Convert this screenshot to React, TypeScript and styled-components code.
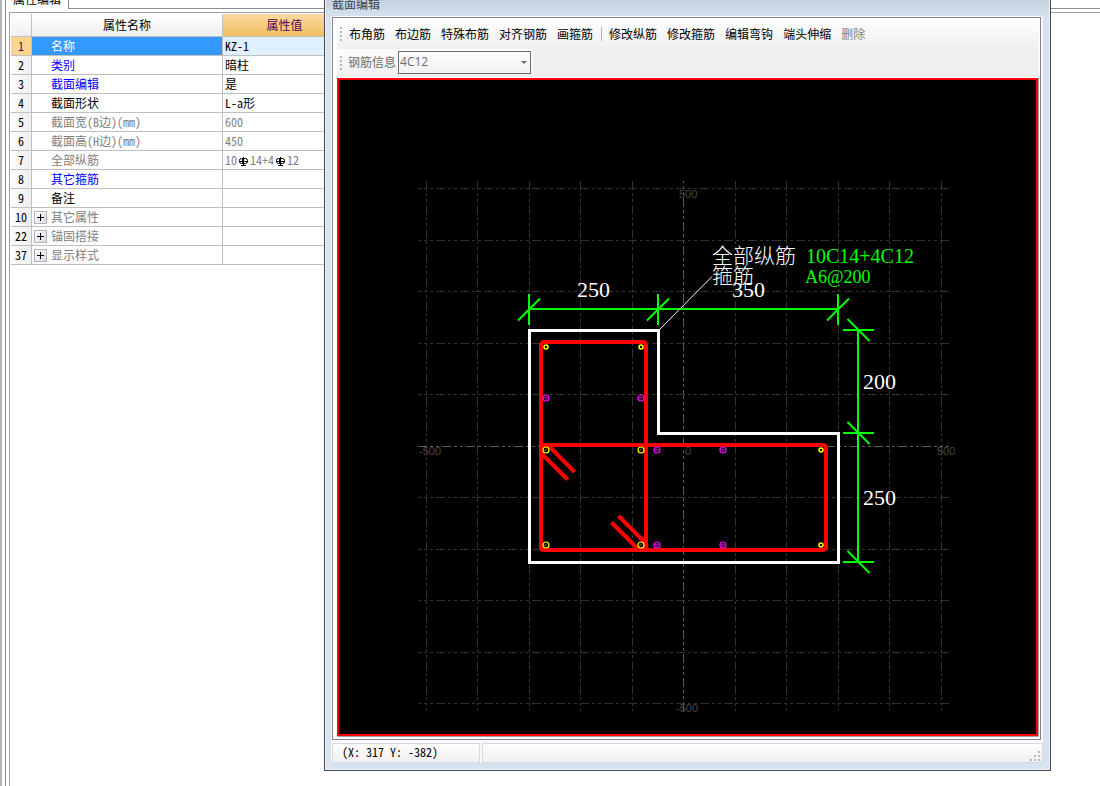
import React from "react";
import styled, { createGlobalStyle, css } from "styled-components";

const GlobalStyle = createGlobalStyle`
  * { box-sizing: border-box; }
  body {
    margin: 0;
    background: #fff;
    color: #000;
    font: 12px/16px "Noto Sans CJK SC", "Liberation Sans", sans-serif;
  }
  button, select { font: inherit; }
`;

const Page = styled.div`
  position: relative;
  display: flex;
  min-height: 100vh;
  overflow: hidden;
`;

const Splitter = styled.div`
  flex: none;
  width: 6px;
  border-left: 2px solid #b4b4b8;
  border-right: 1px solid #8c8c96;
`;

const Dock = styled.main`
  flex: 1;
  min-width: 0;
  display: flex;
  flex-direction: column;
`;

const TabStrip = styled.div`
  display: flex;
  height: 9px;
`;

const Tab = styled.div`
  display: flex;
  align-items: flex-end;
  padding: 0 7px 4px;
  border-right: 1px solid #8c8c96;
  line-height: 12px;
  overflow: hidden;
`;

const TabFiller = styled.div`
  flex: 1;
  border-bottom: 1px solid #8c8c96;
`;

const Panel = styled.section`
  flex: 1;
  margin: 3px 0 0 3px;
  padding: 1px;
  border: solid #a0a0a4;
  border-width: 1px 0 0 1px;
`;

const PropertyTable = styled.table`
  width: 336px;
  table-layout: fixed;
  border-spacing: 0;
  font-feature-settings: "hwid";
`;

const line = css`
  border: solid #c0c0c0;
  border-width: 0 1px 1px 0;
`;

const HeadCell = styled.th<{ $active?: boolean; $width: number }>`
  ${line}
  width: ${(p) => p.$width}px;
  height: 23px;
  padding: 0;
  font-weight: 400;
  color: ${(p) => (p.$active ? "#5a005a" : "#000")};
  background: ${(p) =>
    p.$active
      ? "linear-gradient(#fbdba0, #f0c060)"
      : "linear-gradient(#fff, #efefef)"};
`;

const NumberCell = styled.th<{ $active?: boolean }>`
  ${line}
  height: 19px;
  padding: 0;
  font-weight: 400;
  color: ${(p) => (p.$active ? "#5a005a" : "#000")};
  background: ${(p) =>
    p.$active ? "#ffd48c" : "linear-gradient(90deg, #fdfdfd, #eeeeee)"};
`;

const NameCell = styled.td<{ $color: string; $active?: boolean; $group?: boolean }>`
  ${line}
  padding: 0 0 0 ${(p) => (p.$group ? 2 : 19)}px;
  color: ${(p) => (p.$active ? "#fff" : p.$color)};
  background: ${(p) => (p.$active ? "#3399ff" : "#fff")};
`;

const GroupLabel = styled.div`
  display: flex;
  align-items: center;
  gap: 4px;
`;

const ExpandButton = styled.button`
  display: grid;
  place-items: center;
  width: 13px;
  height: 13px;
  padding: 0;
  border: 1px solid #b4b4b4;
  background: linear-gradient(135deg, #fff, #d8dce4);
`;

const ValueCell = styled.td<{ $color: string; $active?: boolean }>`
  ${line}
  padding: 0 0 0 2px;
  line-height: 16px;
  color: ${(p) => p.$color};
  background: ${(p) => (p.$active ? "#e0f0ff" : "#fff")};
`;

const RebarIcon = styled.svg`
  width: 13px;
  height: 11px;
  vertical-align: -2px;
`;

const Dialog = styled.section`
  position: absolute;
  inset: 0 49px 15px 324px;
  display: flex;
  flex-direction: column;
  padding: 0 7px 7px 6px;
  border: solid #484a4e;
  border-width: 0 1px 1px;
  background: #d7e3f1;
  box-shadow: inset 1px -1px 0 #edf2f8, inset -1px 0 0 #edf2f8;
`;

const TitleBar = styled.h1`
  flex: none;
  height: 16px;
  margin: 0 -6px 0 -5px;
  padding-left: 6px;
  overflow: hidden;
  font-size: 12px;
  font-weight: 400;
  line-height: 8px;
  color: #3c444c;
  background: linear-gradient(#c4d1df, #d5e1ee);
`;

const Client = styled.div`
  flex: 1;
  min-height: 0;
  display: flex;
  flex-direction: column;
  padding: 1px 0 0 1px;
  background: #f6f8fb;
`;

const Frame = styled.div`
  flex: 1;
  min-height: 0;
  display: flex;
  flex-direction: column;
  margin-right: 2px;
  padding: 3px 1px 2px 4px;
  border: 1px solid #82868e;
  background: #fff;
`;

const Toolbars = styled.div`
  flex: none;
  padding-bottom: 1px;
  background: linear-gradient(#efefef, #efefef) top / 100% 56px no-repeat;
`;

const Toolbar = styled.div`
  display: flex;
  align-items: center;
  height: 28px;
  padding: 0 0 2px 3px;
  background: linear-gradient(#fdfdfd, #efefef);
`;

const ComboToolbar = styled(Toolbar)`
  width: 196px;
  padding-bottom: 1px;
  border-radius: 3px;
`;

const Grip = styled.span`
  flex: none;
  width: 2px;
  height: 14px;
  margin-right: 2px;
  background: repeating-linear-gradient(#b8b8b8 0 2px, transparent 2px 4px);
`;

const ToolButton = styled.button`
  flex: none;
  padding: 0 5px;
  border: 0;
  background: none;
  color: #000;
  white-space: nowrap;
  line-height: 20px;

  &:disabled { color: #808080; }
`;

const Separator = styled.span`
  flex: none;
  width: 1px;
  height: 14px;
  margin: 0 2px 0 3px;
  background: #b8b8b8;
`;

const ComboLabel = styled.label`
  padding: 0 2px 1px 4px;
  color: #6d6d6d;
`;

const Combo = styled.div`
  position: relative;
  width: 133px;
  height: 23px;
`;

const ComboSelect = styled.select`
  appearance: none;
  width: 100%;
  height: 100%;
  padding: 0 16px 1px 1px;
  border: 1px solid #6d6d6d;
  border-radius: 0;
  background: transparent;
  color: #6d6d6d;
  font-family: "Open Sans", sans-serif;
  opacity: 1;
`;

const ComboArrow = styled.span`
  position: absolute;
  right: 4px;
  top: 10px;
  border: solid transparent;
  border-width: 3px 3px 0;
  border-top-color: #6d6d6d;
  pointer-events: none;
`;

const Viewport = styled.div`
  flex: 1;
  min-height: 0;
  display: flex;
  border: solid #a0a0a4;
  border-width: 0 1px 1px 0;
`;

const Drawing = styled.svg`
  flex: 1;
  min-width: 0;
  border: 2px solid #ff0000;
  background: #000;
`;

const StatusBar = styled.footer`
  flex: none;
  display: flex;
  gap: 2px;
  padding-top: 3px;
`;

const StatusCell = styled.div<{ $grow?: boolean }>`
  flex: ${(p) => (p.$grow ? "1" : "0 0 148px")};
  display: flex;
  align-items: flex-end;
  justify-content: ${(p) => (p.$grow ? "flex-end" : "flex-start")};
  height: 20px;
  padding: ${(p) => (p.$grow ? "0 1px 0" : "0 9px 2px")};
  border: 1px solid #d9d9d9;
  background: linear-gradient(#fdfdfd, #f0f0f0);
  font-feature-settings: "hwid";
`;

type Row = { no: number; name: string; value?: React.ReactNode; color?: string; group?: boolean };

const BLUE = "#0000ff";
const GRAY = "#808080";

function Rebar() {
  return (
    <RebarIcon viewBox="0 0 13 11" fill="none" stroke="#000" aria-label="C">
      <rect x="2.5" y="2.5" width="8" height="5" rx="2" />
      <path d="M6.5 1v9M2 5.500h9M4 9.500h5" />
      <path d="M5.500 2v6" />
    </RebarIcon>
  );
}

const rows: Row[] = [
  { no: 1, name: "名称", value: "KZ-1" },
  { no: 2, name: "类别", value: "暗柱", color: BLUE },
  { no: 3, name: "截面编辑", value: "是", color: BLUE },
  { no: 4, name: "截面形状", value: "L-a形" },
  { no: 5, name: "截面宽(B边)(mm)", value: "600", color: GRAY },
  { no: 6, name: "截面高(H边)(mm)", value: "450", color: GRAY },
  { no: 7, name: "全部纵筋", value: <>10<Rebar />14+4<Rebar />12</>, color: GRAY },
  { no: 8, name: "其它箍筋", color: BLUE },
  { no: 9, name: "备注" },
  { no: 10, name: "其它属性", color: GRAY, group: true },
  { no: 22, name: "锚固搭接", color: GRAY, group: true },
  { no: 37, name: "显示样式", color: GRAY, group: true },
];

function Properties() {
  return (
    <PropertyTable>
      <thead>
        <tr>
          <HeadCell $width={21} />
          <HeadCell $width={191}>属性名称</HeadCell>
          <HeadCell $width={124} $active>属性值</HeadCell>
        </tr>
      </thead>
      <tbody>
        {rows.map((r) => {
          const active = r.no === 1;
          return (
            <tr key={r.no}>
              <NumberCell scope="row" $active={active}>{r.no}</NumberCell>
              <NameCell $color={r.color ?? "#000"} $active={active} $group={r.group}>
                {r.group ? (
                  <GroupLabel>
                    <ExpandButton aria-label={`展开${r.name}`}>
                      <svg width="7" height="7" stroke="#000">
                        <path d="M0 3.5h7M3.5 0v7" />
                      </svg>
                    </ExpandButton>
                    {r.name}
                  </GroupLabel>
                ) : (
                  r.name
                )}
              </NameCell>
              <ValueCell $color={r.color === GRAY ? GRAY : "#000"} $active={active}>
                {r.value}
              </ValueCell>
            </tr>
          );
        })}
      </tbody>
    </PropertyTable>
  );
}

const gridX = [426, 477, 529, 580, 632, 683, 735, 786, 838, 889, 941];
const gridY = [188, 240, 291, 343, 394, 446, 497, 549, 600, 652, 703];
const cornerBars = [
  [546, 347, 2], [641, 347, 2], [821, 450, 2], [821, 545, 2],
  [546, 450, 3], [641, 450, 3], [546, 545, 3], [641, 545, 3],
];
const sideBars = [[546, 398], [641, 398], [657, 450], [723, 450], [657, 545], [723, 545]];

function Section() {
  return (
    <Drawing viewBox="339 80 697 654" role="img" aria-label="L-a形截面">
      <g stroke="#333" strokeDasharray="9 3 3 3 3 3" shapeRendering="crispEdges">
        {gridX.map((x) =>
          x === 683 ? (
            <path key={x} d="M683.5 711V181" stroke="#5c5c5c" />
          ) : (
            <path key={x} d={`M${x + 0.5} 181V711`} />
          ),
        )}
        {gridY.map((y) =>
          y === 446 ? (
            <path key={y} d="M418 446.5H949" stroke="#5c5c5c" />
          ) : (
            <path key={y} d={`M949 ${y + 0.5}H418`} />
          ),
        )}
      </g>
      <g fill="#4a4644" fontFamily="Liberation Sans, sans-serif" fontSize="11">
        <text x="679" y="198">500</text>
        <text x="676" y="712">-500</text>
        <text x="419" y="455">-500</text>
        <text x="937" y="455">500</text>
        <text x="685" y="455">0</text>
      </g>

      <g fill="none" stroke="#00ff00" strokeWidth="2">
        <path d="M529 309H838M858 330V562" />
        {[529, 658, 838].map((x) => (
          <path key={x} d={`M${x} 294v31M${x - 11} 320.500l22 -22`} />
        ))}
        {[330, 433, 562].map((y) => (
          <path key={y} d={`M843 ${y}h31M847.500 ${y - 11}l22 22`} />
        ))}
      </g>
      <path d="M660 329L712 276.500" stroke="#fff" />

      <path
        d="M529.500 330.500H658.500V433.500H838.500V562.500H529.500Z"
        fill="none"
        stroke="#fff"
        strokeWidth="3"
      />
      <g fill="none" stroke="#ff0000" strokeWidth="4">
        <rect x="541" y="342" width="105" height="208" rx="3" />
        <rect x="541" y="445" width="285" height="105" rx="3" />
        <path d="M549 446L574.500 472M541 453L567.500 479.500M618.500 516L645 542.500M611.500 522.500L638 549" />
      </g>
      <g fill="none" stroke="#ffff00">
        {cornerBars.map(([x, y, r]) => (
          <g key={`${x}-${y}`}>
            <circle cx={x} cy={y} r={r} strokeWidth={r === 3 ? 1.2 : 1.5} />
            {r === 3 && <path d={`M${x - 2} ${y + 1.5}l3 -3`} stroke="#a08a00" />}
          </g>
        ))}
      </g>
      <g fill="none" stroke="#ff00ff">
        {sideBars.map(([x, y]) => (
          <g key={`${x}-${y}`}>
            <circle cx={x} cy={y} r="3" strokeWidth="1.2" />
            <path d={`M${x - 2} ${y - 0.5}h4M${x} ${y}v3`} stroke="#a000a0" />
          </g>
        ))}
      </g>

      <g fill="#fff" fontFamily="Liberation Serif, serif" fontSize="22">
        <text x="577" y="297">250</text>
        <text x="732" y="297">350</text>
        <text x="863" y="389">200</text>
        <text x="863" y="505">250</text>
      </g>
      <g fill="#fff" fontFamily="Noto Sans CJK SC, sans-serif" fontSize="21" fontWeight="300">
        <text x="712" y="263">全部纵筋</text>
        <text x="712" y="283">箍筋</text>
      </g>
      <g fill="#00ff00" fontFamily="Liberation Serif, serif">
        <text x="806" y="263" fontSize="20">10C14+4C12</text>
        <text x="805" y="283" fontSize="18">A6@200</text>
      </g>
    </Drawing>
  );
}

const editTools = ["布角筋", "布边筋", "特殊布筋", "对齐钢筋", "画箍筋"];
const modifyTools = ["修改纵筋", "修改箍筋", "编辑弯钩", "端头伸缩"];

export default function App() {
  return (
    <>
      <GlobalStyle />
      <Page>
        <Splitter />
        <Dock>
          <TabStrip>
            <Tab>属性编辑</Tab>
            <TabFiller />
          </TabStrip>
          <Panel>
            <Properties />
          </Panel>
        </Dock>
        <Dialog>
          <TitleBar>截面编辑</TitleBar>
          <Client>
            <Frame>
              <Toolbars>
                <Toolbar>
                  <Grip />
                  {editTools.map((t) => <ToolButton key={t}>{t}</ToolButton>)}
                  <Separator />
                  {modifyTools.map((t) => <ToolButton key={t}>{t}</ToolButton>)}
                  <ToolButton disabled>删除</ToolButton>
                </Toolbar>
                <ComboToolbar>
                  <Grip />
                  <ComboLabel htmlFor="rebar">钢筋信息</ComboLabel>
                  <Combo>
                    <ComboSelect id="rebar" disabled defaultValue="4C12">
                      <option>4C12</option>
                    </ComboSelect>
                    <ComboArrow />
                  </Combo>
                </ComboToolbar>
              </Toolbars>
              <Viewport>
                <Section />
              </Viewport>
            </Frame>
            <StatusBar>
              <StatusCell>(X: 317 Y: -382)</StatusCell>
              <StatusCell $grow>
                <svg width="11" height="11" fill="#b8b8b8" aria-hidden="true">
                  <path d="M8 0h2v2h-2zM8 4h2v2h-2zM8 8h2v2h-2zM4 4h2v2h-2zM4 8h2v2h-2zM0 8h2v2h-2z" />
                </svg>
              </StatusCell>
            </StatusBar>
          </Client>
        </Dialog>
      </Page>
    </>
  );
}
